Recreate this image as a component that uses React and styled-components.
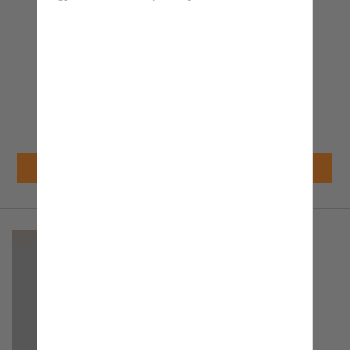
import React from 'react';
import styled, { createGlobalStyle } from 'styled-components';

const Global = createGlobalStyle`
  html, body {
    margin: 0;
    padding: 0;
    height: 100%;
    overflow: hidden;
    background: #e0e0e0;
    font-family: "Liberation Sans", Arial, sans-serif;
  }
`;

const Page = styled.div`
  position: relative;
  width: 350px;
  height: 350px;
  overflow: hidden;
  background: #e0e0e0;
`;

const Content = styled.div`
  display: flex;
  flex-direction: column;
  padding-top: 153px;
`;

const ActionBar = styled.div`
  height: 30px;
  margin: 0 18px 0 17px;
  background: #fe9434;
`;

const Divider = styled.hr`
  border: 0;
  border-top: 1px solid #bcbcbc;
  margin: 25px 0 0;
`;

const Thumb = styled.div`
  margin: 21px 0 0 12px;
  width: 150px;
  height: 140px;
  background: linear-gradient(#b6a99e, #aeaeae 20px);
`;

// dimmed backdrop behind the sheet
const Overlay = styled.div`
  position: absolute;
  inset: 0;
  background: rgba(0, 0, 0, 0.5);
`;

const Sheet = styled.div`
  position: absolute;
  top: 0;
  bottom: 0;
  left: 37px;
  width: 275px;
  background: #fff;
  border-right: 1px solid #d8d8d8;
  overflow: hidden;
`;

const SheetBody = styled.div`
  margin-top: -14px;
  padding: 0 20px;
`;

const Hint = styled.p`
  margin: 0;
  font-size: 13px;
  line-height: 15px;
  color: #a8a8a8;
  white-space: nowrap;
`;

export default function App() {
  return (
    <Page>
      <Global />
      <Content>
        <ActionBar />
        <Divider />
        <Thumb />
      </Content>
      <Overlay />
      <Sheet>
        <SheetBody>
          <Hint>gym fees are all paid by the month</Hint>
        </SheetBody>
      </Sheet>
    </Page>
  );
}
